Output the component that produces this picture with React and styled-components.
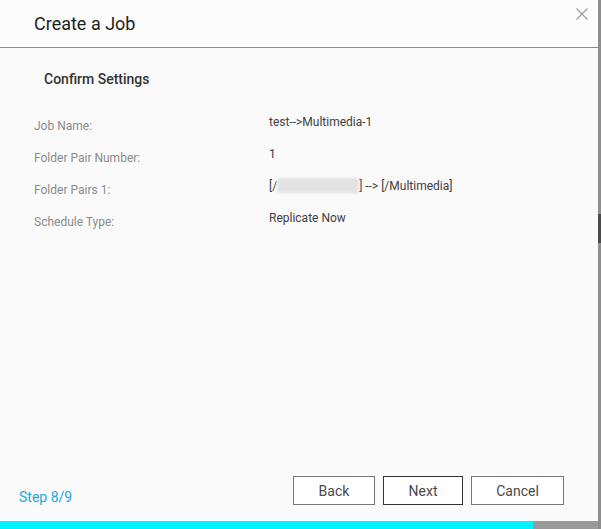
import React from 'react';
import styled, { createGlobalStyle } from 'styled-components';

const GlobalStyle = createGlobalStyle`
  html, body {
    margin: 0;
    padding: 0;
    background: #fafafa;
  }
  body {
    font-family: Roboto, "Liberation Sans", Arial, sans-serif;
  }
`;

const Screen = styled.div`
  display: flex;
  width: 601px;
  height: 529px;
  overflow: hidden;
`;

const Dialog = styled.div`
  position: relative;
  display: flex;
  flex-direction: column;
  width: 598px;
  height: 529px;
  background: #fafafa;
`;

const EdgeStrip = styled.div`
  display: flex;
  flex-direction: column;
  width: 3px;
  background: #8e8e8e;
`;

const EdgeThumb = styled.div`
  margin-top: 214px;
  height: 29px;
  background: #4a4a4a;
`;

const Header = styled.div`
  display: flex;
  align-items: center;
  height: 47px;
  padding-left: 34px;
  background: #fcfcfc;
  border-bottom: 1px solid #8a8a8a;
`;

const Title = styled.h1`
  margin: 0;
  font-size: 18px;
  font-weight: 400;
  color: #1e1e1e;
`;

const CloseButton = styled.button`
  position: absolute;
  top: 6px;
  right: 8px;
  width: 16px;
  height: 16px;
  padding: 0;
  border: none;
  background: transparent;
  cursor: pointer;
`;

const Body = styled.div`
  flex: 1;
  display: flex;
  flex-direction: column;
  padding: 23px 0 0 34px;
`;

const SectionTitle = styled.h2`
  margin: 0 0 27px 10px;
  font-size: 14px;
  line-height: 16px;
  font-weight: 500;
  color: #333;
`;

const Row = styled.div`
  display: grid;
  grid-template-columns: 235px 1fr;
  height: 32px;
  font-size: 12px;
  line-height: 16px;
`;

const Label = styled.div`
  padding-top: 4px;
  color: #8a8a8a;
`;

const Value = styled.div`
  display: flex;
  align-items: flex-start;
  color: #404040;
`;

const Blurred = styled.span`
  display: inline-block;
  width: 82px;
  height: 15px;
  background: #e2e2e2;
  filter: blur(1.5px);
`;

const Footer = styled.div`
  display: flex;
  align-items: flex-end;
  justify-content: space-between;
  padding: 0 34px 16px 19px;
`;

const StepText = styled.div`
  font-size: 14px;
  line-height: 16px;
  color: #1ca8da;
`;

const Buttons = styled.div`
  display: flex;
  gap: 8px;
`;

const Button = styled.button`
  width: ${(p) => p.$width}px;
  height: 29px;
  padding: 0;
  border: 1px solid ${(p) => (p.$primary ? '#333' : '#777')};
  background: #fff;
  font-family: Roboto, "Liberation Sans", Arial, sans-serif;
  font-size: 14px;
  color: #4a4a4a;
  cursor: pointer;
`;

const Progress = styled.div`
  height: 8px;
  background: #999;
`;

const ProgressFill = styled.div`
  width: ${(p) => p.$percent}%;
  height: 100%;
  background: #00f3ff;
`;

const rows = [
  { label: 'Job Name:', value: 'test-->Multimedia-1' },
  { label: 'Folder Pair Number:', value: '1' },
  { label: 'Folder Pairs 1:', value: 'pair' },
  { label: 'Schedule Type:', value: 'Replicate Now' },
];

const App = () => {
  const step = 8;
  const total = 9;
  return (
    <>
      <GlobalStyle />
      <Screen>
        <Dialog>
          <Header>
            <Title>Create a Job</Title>
          </Header>
          <CloseButton aria-label="Close">
            <svg width="16" height="16" viewBox="0 0 16 16">
              <path d="M2.5 2.5 L13.5 13.5 M13.5 2.5 L2.5 13.5" stroke="#9a9a9a" strokeWidth="1.1" fill="none" />
            </svg>
          </CloseButton>
          <Body>
            <SectionTitle>Confirm Settings</SectionTitle>
            {rows.map((r) => (
              <Row key={r.label}>
                <Label>{r.label}</Label>
                <Value>
                  {r.value === 'pair' ? (
                    <>
                      [/<Blurred />]&nbsp;--&gt; [/Multimedia]
                    </>
                  ) : (
                    r.value
                  )}
                </Value>
              </Row>
            ))}
          </Body>
          <Footer>
            <StepText>
              Step {step}/{total}
            </StepText>
            <Buttons>
              <Button $width={82}>Back</Button>
              <Button $width={80} $primary>
                Next
              </Button>
              <Button $width={93}>Cancel</Button>
            </Buttons>
          </Footer>
          <Progress>
            <ProgressFill $percent={(533 / 598) * 100} />
          </Progress>
        </Dialog>
        <EdgeStrip>
          <EdgeThumb />
        </EdgeStrip>
      </Screen>
    </>
  );
};

export default App;
